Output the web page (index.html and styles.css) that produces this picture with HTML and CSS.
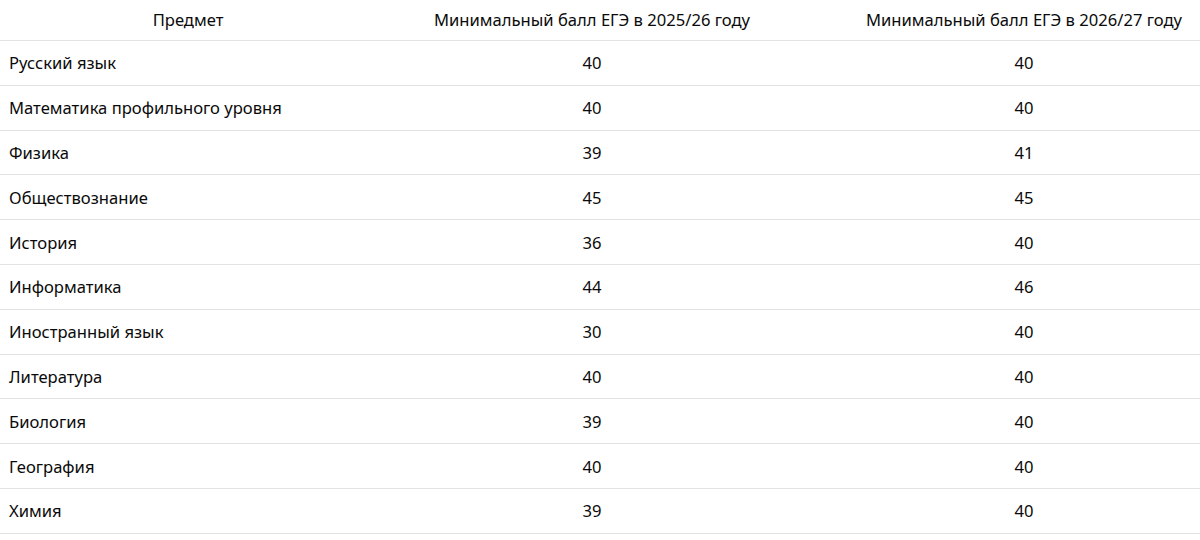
FILE: index.html
```html
<!DOCTYPE html>
<html lang="ru">
<head>
<meta charset="utf-8">
<link rel="stylesheet" href="styles.css">
</head>
<body>
<table class="scores">
  <colgroup>
    <col class="c-subj">
    <col class="c-year">
    <col class="c-year">
  </colgroup>
  <thead>
    <tr><th>Предмет</th><th>Минимальный балл ЕГЭ в 2025/26 году</th><th>Минимальный балл ЕГЭ в 2026/27 году</th></tr>
  </thead>
  <tbody>
    <tr><td>Русский язык</td><td>40</td><td>40</td></tr>
    <tr><td>Математика профильного уровня</td><td>40</td><td>40</td></tr>
    <tr><td>Физика</td><td>39</td><td>41</td></tr>
    <tr><td>Обществознание</td><td>45</td><td>45</td></tr>
    <tr><td>История</td><td>36</td><td>40</td></tr>
    <tr><td>Информатика</td><td>44</td><td>46</td></tr>
    <tr><td>Иностранный язык</td><td>30</td><td>40</td></tr>
    <tr><td>Литература</td><td>40</td><td>40</td></tr>
    <tr><td>Биология</td><td>39</td><td>40</td></tr>
    <tr><td>География</td><td>40</td><td>40</td></tr>
    <tr><td>Химия</td><td>39</td><td>40</td></tr>
  </tbody>
</table>
</body>
</html>
```

FILE: styles.css
```css
html, body {
  margin: 0;
  padding: 0;
  background: #fff;
  overflow: hidden;
}
body {
  font-family: "Noto Sans", "Open Sans", sans-serif;
  font-size: 16.6px;
  color: #0a0a0a;
}
.scores {
  width: 1240px;
  border-collapse: collapse;
  table-layout: fixed;
}
.c-subj { width: 376px; }
.c-year { width: 432px; }
.scores th {
  font-weight: normal;
  text-align: center;
  height: 40.5px;
  padding: 0 8px;
  box-sizing: border-box;
  border-bottom: 1px solid #e2e2e2;
  line-height: 20px;
}
.scores td {
  height: 44.8px;
  padding: 1px 9px 0;
  box-sizing: border-box;
  border-bottom: 1px solid #e2e2e2;
  text-align: center;
  line-height: 20px;
}
.scores td:first-child {
  text-align: left;
}
```
